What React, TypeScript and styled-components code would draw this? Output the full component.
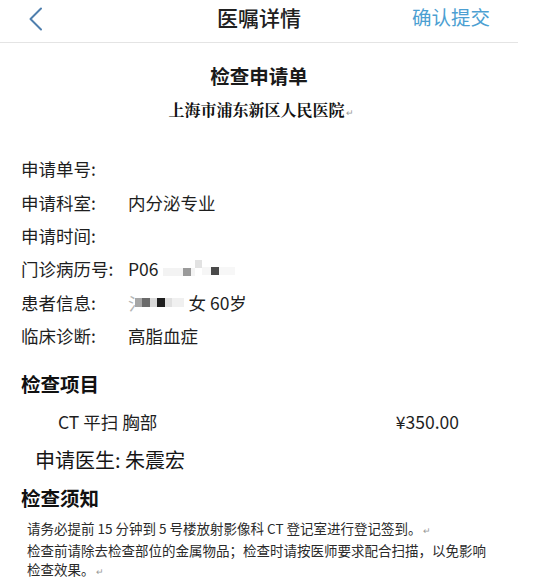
import React from "react";
import styled, { createGlobalStyle } from "styled-components";

const Global = createGlobalStyle`
  html, body { margin: 0; padding: 0; background: #fff; }
  body { font-family: "Noto Sans CJK SC", "Noto Sans", sans-serif; color: #1c1c1c; }
`;

const Page = styled.div`
  width: 518px;
  display: flex;
  flex-direction: column;
`;

const Header = styled.header`
  border-bottom: 1px solid #e4e4e4;
  display: grid;
  grid-template-columns: 1fr auto 1fr;
  align-items: start;
  padding: 4px 28px 0;
  box-sizing: content-box;
  height: 38px;
`;

const Back = styled.div`
  justify-self: start;
  display: flex;
  padding-top: 3px;
`;

const HeaderTitle = styled.div`
  font-size: 21px;
  line-height: 26px;
  color: #202020;
  font-weight: 500;
`;

const Submit = styled.div`
  justify-self: end;
  font-size: 19.5px;
  line-height: 26px;
  color: #4c9fd2;
`;

const DocTitle = styled.div`
  margin-top: 19px;
  text-align: center;
  font-size: 19.5px;
  line-height: 28px;
  font-weight: 700;
  color: #1a1a1a;
`;

const Hospital = styled.div`
  margin-top: 8px;
  text-align: center;
  font-family: "Noto Serif CJK SC", "Noto Sans CJK SC", serif;
  font-size: 16px;
  line-height: 24px;
  font-weight: 700;
  color: #111;
  padding-left: 4px;
`;

const Mark = styled.span`
  font-size: 9px;
  color: #999;
  font-weight: 400;
  margin-left: 1px;
`;

const Fields = styled.div`
  margin-top: 27px;
  padding-left: 21px;
  display: flex;
  flex-direction: column;
`;

const FieldRow = styled.div`
  display: grid;
  grid-template-columns: 107px 1fr;
  height: 33.4px;
  align-items: center;
  font-size: 17.5px;
  color: #1e1e1e;
`;

const Value = styled.span`
  display: flex;
  align-items: center;
`;

const Faded = styled.span`
  color: #b5b5b5;
  margin-right: -11px;
`;

const MosaicWrap = styled.span<{ $ml: number }>`
  display: inline-flex;
  align-items: center;
  height: 22px;
  margin-left: ${(p) => p.$ml}px;
`;

const Cell = styled.span<{ $w: number; $h: number; $c: string; $dy: number }>`
  display: inline-block;
  width: ${(p) => p.$w}px;
  height: ${(p) => p.$h}px;
  background: ${(p) => p.$c};
  transform: translateY(${(p) => p.$dy}px);
`;

const Gender = styled.span`
  margin-left: 5px;
`;

const SectionTitle = styled.div<{ $mt: number }>`
  margin-top: ${(p) => p.$mt}px;
  padding-left: 21px;
  font-size: 19.5px;
  line-height: 30px;
  font-weight: 700;
  color: #111;
`;

const ItemRow = styled.div`
  margin-top: 8px;
  display: flex;
  justify-content: space-between;
  padding: 0 59px 0 58px;
  font-size: 17.5px;
  line-height: 30px;
  color: #1e1e1e;
`;

const Doctor = styled.div`
  margin-top: 8px;
  padding-left: 35px;
  font-size: 20px;
  line-height: 30px;
  color: #151515;
`;

const Notes = styled.div`
  margin-top: 6px;
  padding-left: 27px;
  font-size: 13.5px;
  line-height: 19.5px;
  color: #2a2a2a;
`;

const NoteLine = styled.div`
  white-space: nowrap;
`;

type C = { w: number; h?: number; c: string; dy?: number };

const Mosaic = ({ cells, ml = 0 }: { cells: C[]; ml?: number }) => (
  <MosaicWrap $ml={ml}>
    {cells.map((c, i) => (
      <Cell key={i} $w={c.w} $h={c.h ?? 8} $c={c.c} $dy={c.dy ?? 0} />
    ))}
  </MosaicWrap>
);

const idCells: C[] = [
  { w: 20, c: "#f3f3f3", dy: 3 },
  { w: 8, c: "#9a9a9a", dy: 3 },
  { w: 4, c: "#f4f4f4", dy: 3 },
  { w: 7, c: "#e2e2e2", dy: -5 },
  { w: 9, c: "#f6f6f6", dy: 2 },
  { w: 8, c: "#4a4a4a", dy: 2 },
  { w: 16, c: "#f7f7f7", dy: 2 },
];

const nameCells: C[] = [
  { w: 7, c: "#a6a6a6", h: 9 },
  { w: 8, c: "#6a6a6a", h: 9 },
  { w: 7, c: "#d8d8d8", h: 9 },
  { w: 8, c: "#1e1e1e", h: 9 },
  { w: 7, c: "#e0e0e0", h: 9 },
  { w: 12, c: "#f0f0f0", h: 9 },
];

const fields: { label: string; value?: React.ReactNode }[] = [
  { label: "申请单号:" },
  { label: "申请科室:", value: "内分泌专业" },
  { label: "申请时间:" },
  {
    label: "门诊病历号:",
    value: (
      <>
        P06
        <Mosaic cells={idCells} ml={4} />
      </>
    ),
  },
  {
    label: "患者信息:",
    value: (
      <>
        <Faded>氵</Faded>
        <Mosaic cells={nameCells} ml={0} />
        <Gender>女 60岁</Gender>
      </>
    ),
  },
  { label: "临床诊断:", value: "高脂血症" },
];

export default function App() {
  return (
    <Page>
      <Global />
      <Header>
        <Back>
          <svg width="15" height="24" viewBox="0 0 15 24">
            <path d="M13 1.5 L2.5 12 L13 22.5" fill="none" stroke="#4f7fae" strokeWidth="2" strokeLinecap="round" strokeLinejoin="round" />
          </svg>
        </Back>
        <HeaderTitle>医嘱详情</HeaderTitle>
        <Submit>确认提交</Submit>
      </Header>
      <DocTitle>检查申请单</DocTitle>
      <Hospital>
        上海市浦东新区人民医院<Mark>↵</Mark>
      </Hospital>
      <Fields>
        {fields.map((f) => (
          <FieldRow key={f.label}>
            <span>{f.label}</span>
            <Value>{f.value}</Value>
          </FieldRow>
        ))}
      </Fields>
      <SectionTitle $mt={17}>检查项目</SectionTitle>
      <ItemRow>
        <span>CT 平扫 胸部</span>
        <span>¥350.00</span>
      </ItemRow>
      <Doctor>申请医生: 朱震宏</Doctor>
      <SectionTitle $mt={8}>检查须知</SectionTitle>
      <Notes>
        <NoteLine>
          请务必提前 15 分钟到 5 号楼放射影像科 CT 登记室进行登记签到。<Mark>↵</Mark>
        </NoteLine>
        <NoteLine>检查前请除去检查部位的金属物品；检查时请按医师要求配合扫描，以免影响</NoteLine>
        <NoteLine>
          检查效果。<Mark>↵</Mark>
        </NoteLine>
      </Notes>
    </Page>
  );
}
